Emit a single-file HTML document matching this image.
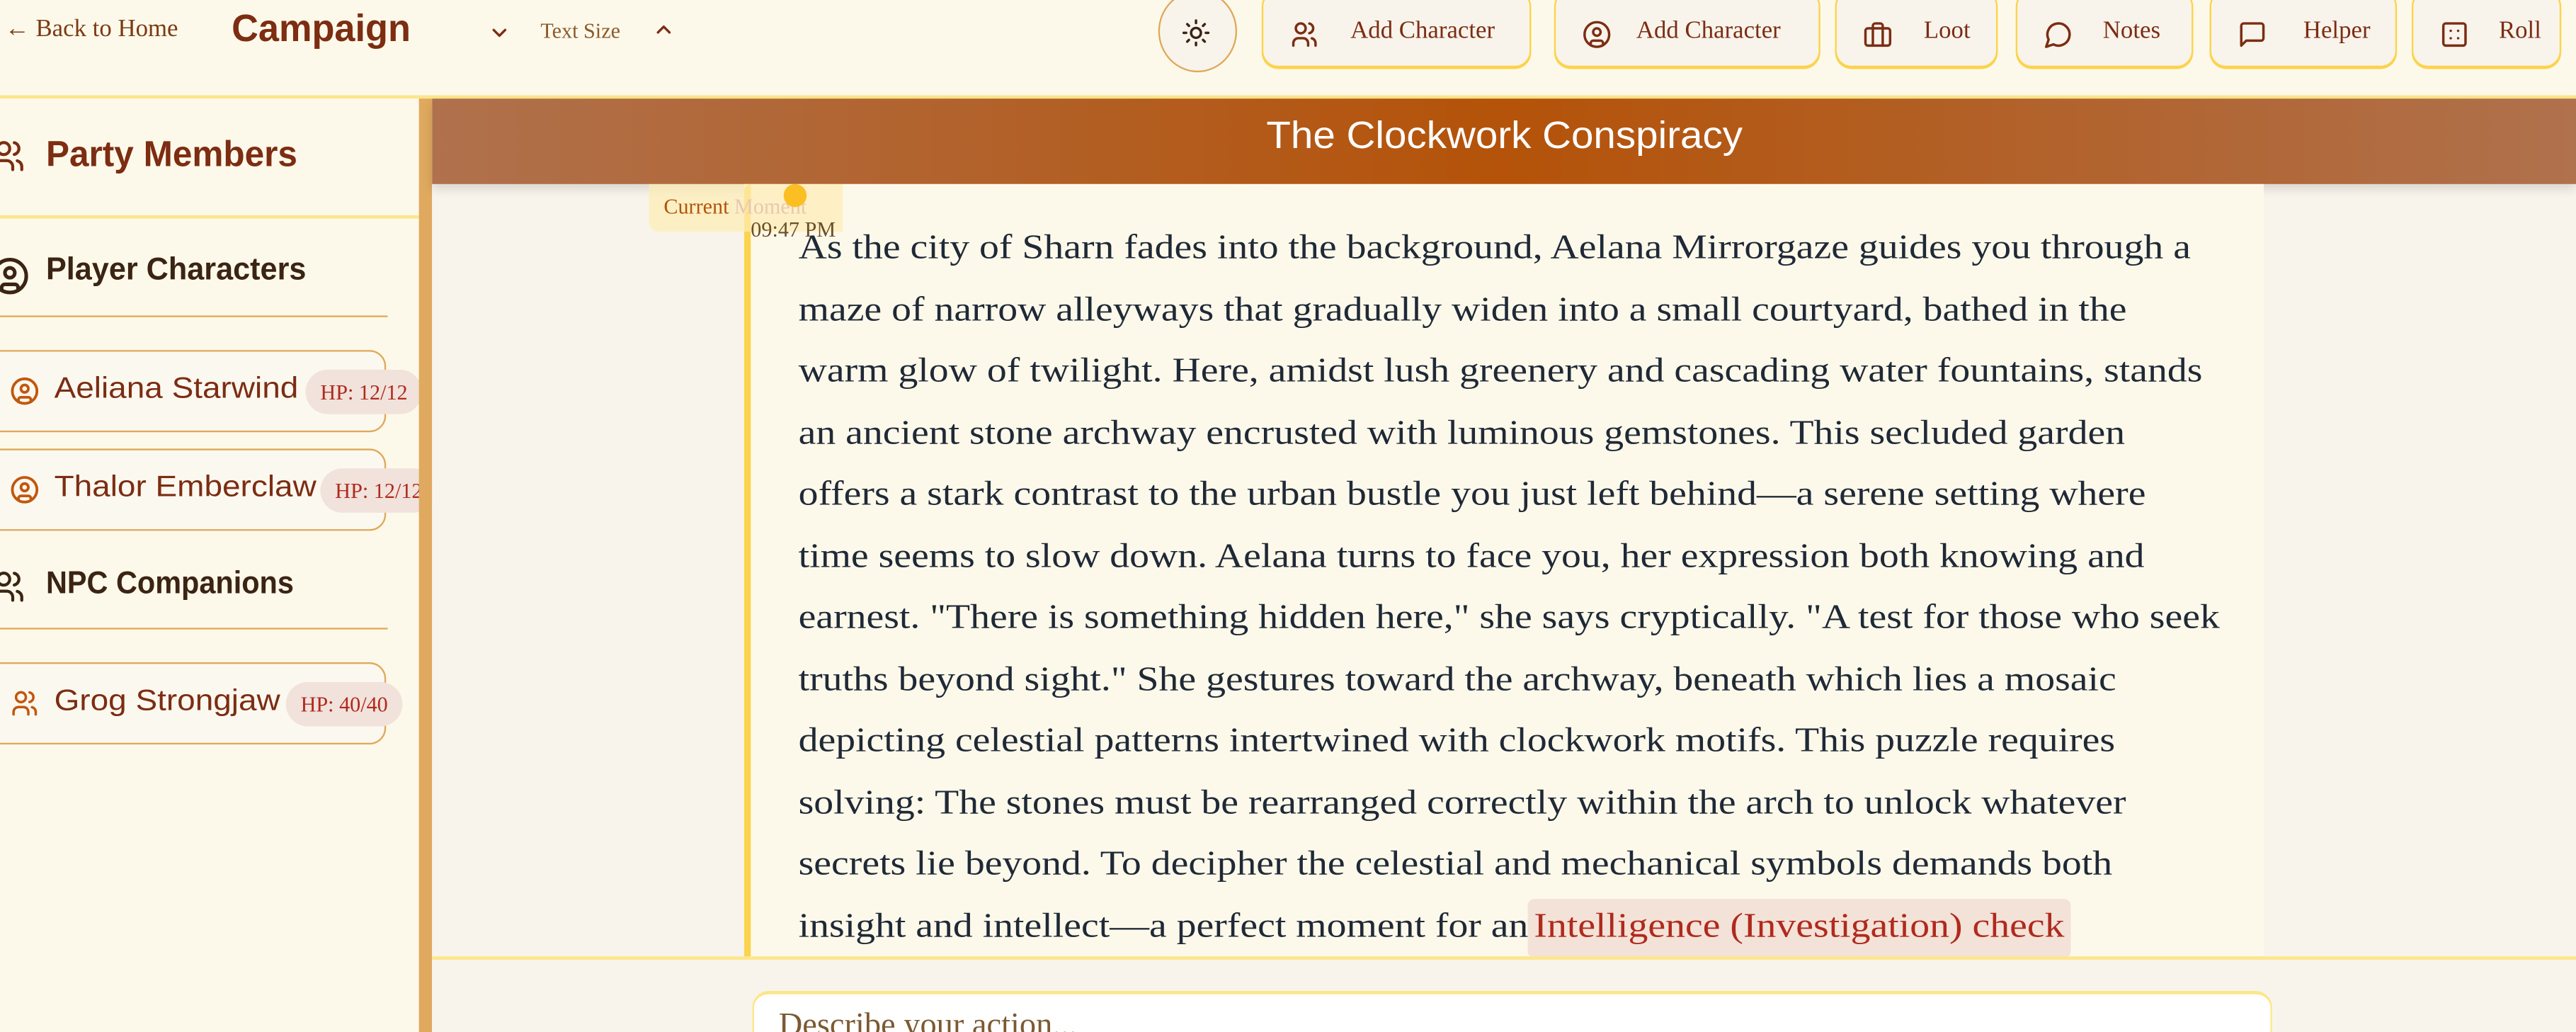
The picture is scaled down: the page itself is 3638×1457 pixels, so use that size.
<!DOCTYPE html>
<html><head><meta charset="utf-8"><style>
*{box-sizing:border-box;margin:0;padding:0}
html,body{width:3638px;height:1456px;overflow:hidden;background:#fdf9ea}
#s{position:absolute;left:0;top:0;width:1568px;height:628px;transform:scale(2.32015);transform-origin:0 0;font-family:"Liberation Serif",serif;background:#fdf9ea;overflow:hidden}
.a{position:absolute}
.disp{font-family:"Liberation Sans",sans-serif;font-weight:bold;transform-origin:0 50%;white-space:nowrap}
.btn{position:absolute;top:-6px;height:47px;background:#f8f4ec;border:1px solid #fcd34d;border-radius:10px;color:#7c2d12;font-size:15px;padding-top:16px;box-shadow:0 1px 0 #fcd34d}
.btn svg{position:absolute;left:16px;top:17px}
.btn span{position:absolute;top:16px}
svg{stroke-linecap:round;stroke-linejoin:round}
.card{position:absolute;left:-12px;width:247px;height:50px;border:1px solid #e0a85a;border-radius:10px;background:#fbf8f0}
.card svg{position:absolute;left:17px;top:15px}
.card .n{position:absolute;left:44px;top:12px;font-family:"Liberation Sans",sans-serif;font-size:18px;color:#7c2d12;white-space:nowrap;transform:scaleX(1.1);transform-origin:0 50%}
.hp{position:absolute;top:11px;height:27px;border-radius:14px;background:#f1e2dc;color:#b02a1d;font-size:13px;padding:6px 9px;white-space:nowrap}
.txt{transform:scaleX(1.144);transform-origin:0 0}
.txt div{height:37.5px;line-height:37.5px;white-space:nowrap}
</style></head><body><div id="s">
<!-- header -->
<div class="a" style="left:3px;top:10px;font-size:15px;color:#7c3a12">← Back to Home</div>
<div class="a disp" style="left:141px;top:4px;font-size:23px;color:#7c2d12;transform:scaleX(0.98)">Campaign</div>
<svg class="a" style="left:297px;top:13px" width="14" height="14" viewBox="0 0 24 24" fill="none" stroke="#7c2d12" stroke-width="2.5"><path d="M6 9l6 6 6-6"/></svg>
<div class="a" style="left:329px;top:11px;font-size:13px;color:#8a5a2b">Text Size</div>
<svg class="a" style="left:397px;top:11px" width="14" height="14" viewBox="0 0 24 24" fill="none" stroke="#7c2d12" stroke-width="2.5"><path d="M6 15l6-6 6 6"/></svg>
<div class="a" style="left:705px;top:-6px;width:48px;height:50px;border-radius:50%;background:#f8f4ec;border:1px solid #e0a85a"></div>
<svg class="a" style="left:719px;top:11px" width="18" height="18" viewBox="0 0 24 24" fill="none" stroke="#3b2414" stroke-width="2"><circle cx="12" cy="12" r="4"/><path d="M12 2v2M12 20v2M4.9 4.9l1.4 1.4M17.7 17.7l1.4 1.4M2 12h2M20 12h2M4.9 19.1l1.4-1.4M17.7 6.3l1.4-1.4"/></svg>
<div class="btn" style="left:768px;width:164px"><svg width="18" height="18" viewBox="0 0 24 24" fill="none" stroke="#7c2d12" stroke-width="2"><circle cx="9" cy="7" r="4"/><path d="M3 21v-2a4 4 0 0 1 4-4h4a4 4 0 0 1 4 4v2M16 3.1a4 4 0 0 1 0 7.8M21 21v-2a4 4 0 0 0-3-3.9"/></svg><span style="left:53px">Add Character</span></div>
<div class="btn" style="left:946px;width:162px"><svg width="18" height="18" viewBox="0 0 24 24" fill="none" stroke="#7c2d12" stroke-width="2"><circle cx="12" cy="12" r="10"/><circle cx="12" cy="10" r="3"/><path d="M7 20.7v-1.7a2 2 0 0 1 2-2h6a2 2 0 0 1 2 2v1.7"/></svg><span style="left:49px">Add Character</span></div>
<div class="btn" style="left:1117px;width:99px"><svg width="18" height="18" viewBox="0 0 24 24" fill="none" stroke="#7c2d12" stroke-width="2"><rect x="2" y="7" width="20" height="14" rx="2"/><path d="M16 21V5a2 2 0 0 0-2-2h-4a2 2 0 0 0-2 2v16"/></svg><span style="left:53px">Loot</span></div>
<div class="btn" style="left:1227px;width:108px"><svg width="18" height="18" viewBox="0 0 24 24" fill="none" stroke="#7c2d12" stroke-width="2"><path d="M7.9 20A9 9 0 1 0 4 16.1L2 22z"/></svg><span style="left:52px">Notes</span></div>
<div class="btn" style="left:1345px;width:114px"><svg width="18" height="18" viewBox="0 0 24 24" fill="none" stroke="#7c2d12" stroke-width="2"><path d="M21 15a2 2 0 0 1-2 2H7l-4 4V5a2 2 0 0 1 2-2h14a2 2 0 0 1 2 2z"/></svg><span style="left:56px">Helper</span></div>
<div class="btn" style="left:1468px;width:91px"><svg width="18" height="18" viewBox="0 0 24 24" fill="none" stroke="#7c2d12" stroke-width="2"><rect x="3" y="3" width="18" height="18" rx="2"/><path d="M9 9h.01M15 15h.01M9 15h.01M15 9h.01"/></svg><span style="left:52px">Roll</span></div>
<div class="a" style="left:0;top:58px;width:1568px;height:2px;background:#fde68a"></div>
<!-- sidebar -->
<div class="a" style="left:0;top:60px;width:255px;height:568px;background:#fdf9ea"></div>
<svg class="a" style="left:-6px;top:84px" width="22" height="22" viewBox="0 0 24 24" fill="none" stroke="#7c2d12" stroke-width="2"><circle cx="9" cy="7" r="4"/><path d="M3 21v-2a4 4 0 0 1 4-4h4a4 4 0 0 1 4 4v2M16 3.1a4 4 0 0 1 0 7.8M21 21v-2a4 4 0 0 0-3-3.9"/></svg>
<div class="a disp" style="left:28px;top:81px;font-size:22px;color:#7c2d12;transform:scaleX(0.97)">Party Members</div>
<div class="a" style="left:0;top:131px;width:255px;height:2px;background:#fde68a"></div>
<svg class="a" style="left:-6px;top:156px" width="24" height="24" viewBox="0 0 24 24" fill="none" stroke="#3b2414" stroke-width="2.2"><circle cx="12" cy="12" r="10"/><circle cx="12" cy="10" r="3"/><path d="M7 20.7v-1.7a2 2 0 0 1 2-2h6a2 2 0 0 1 2 2v1.7"/></svg>
<div class="a disp" style="left:28px;top:154px;font-size:19px;color:#3b2414;transform:scaleX(0.98)">Player Characters</div>
<div class="a" style="left:0;top:192px;width:236px;height:1px;background:#e3a857"></div>
<div class="card" style="top:213px"><svg width="18" height="18" viewBox="0 0 24 24" fill="none" stroke="#c2570c" stroke-width="2.2"><circle cx="12" cy="12" r="10"/><circle cx="12" cy="10" r="3"/><path d="M7 20.7v-1.7a2 2 0 0 1 2-2h6a2 2 0 0 1 2 2v1.7"/></svg><div class="n">Aeliana Starwind</div><div class="hp" style="left:197px">HP: 12/12</div></div>
<div class="card" style="top:273px"><svg width="18" height="18" viewBox="0 0 24 24" fill="none" stroke="#c2570c" stroke-width="2.2"><circle cx="12" cy="12" r="10"/><circle cx="12" cy="10" r="3"/><path d="M7 20.7v-1.7a2 2 0 0 1 2-2h6a2 2 0 0 1 2 2v1.7"/></svg><div class="n">Thalor Emberclaw</div><div class="hp" style="left:206px;width:70px">HP: 12/12</div></div>
<svg class="a" style="left:-6px;top:346px" width="22" height="22" viewBox="0 0 24 24" fill="none" stroke="#3b2414" stroke-width="2"><circle cx="9" cy="7" r="4"/><path d="M3 21v-2a4 4 0 0 1 4-4h4a4 4 0 0 1 4 4v2M16 3.1a4 4 0 0 1 0 7.8M21 21v-2a4 4 0 0 0-3-3.9"/></svg>
<div class="a disp" style="left:28px;top:345px;font-size:19px;color:#3b2414;transform:scaleX(0.94)">NPC Companions</div>
<div class="a" style="left:0;top:382px;width:236px;height:1px;background:#e3a857"></div>
<div class="card" style="top:403px"><svg width="18" height="18" viewBox="0 0 24 24" fill="none" stroke="#c2570c" stroke-width="2"><circle cx="9" cy="7" r="4"/><path d="M3 21v-2a4 4 0 0 1 4-4h4a4 4 0 0 1 4 4v2M16 3.1a4 4 0 0 1 0 7.8M21 21v-2a4 4 0 0 0-3-3.9"/></svg><div class="n">Grog Strongjaw</div><div class="hp" style="left:185px">HP: 40/40</div></div>
<div class="a" style="left:255px;top:60px;width:8px;height:568px;background:#dfa95f"></div>
<!-- main -->
<div class="a" style="left:263px;top:60px;width:1305px;height:568px;background:#f8f4ec"></div>
<div class="a" style="left:263px;top:60px;width:1305px;height:52px;background:linear-gradient(90deg,#b0714d 0%,#b45309 50%,#b0714d 100%);box-shadow:0 3px 6px rgba(0,0,0,.12)"></div>
<div class="a" style="left:263px;top:69px;width:1305px;text-align:center;color:#fff;font-size:23px;font-family:'Liberation Sans',sans-serif"><span style="display:inline-block;transform:scaleX(1.06)">The Clockwork Conspiracy</span></div>
<div class="a" style="left:453px;top:112px;width:925px;height:470px;background:#fdf9ea"></div>
<div class="a" style="left:453px;top:112px;width:4px;height:470px;background:#fcd34d;border-radius:4px 0 0 0"></div>
<div class="a" style="left:395px;top:112px;width:118px;height:29px;background:rgba(253,236,180,.7);border-radius:0 0 0 6px"></div>
<div class="a" style="left:404px;top:118px;font-size:13px;color:#b45309">Current <span style="color:#e8c8b0">Moment</span></div>
<div class="a" style="left:477px;top:112px;width:14px;height:14px;border-radius:50%;background:#fbbf24"></div>
<div class="a" style="left:457px;top:132px;font-size:13px;color:#6b4f2a">09:47 PM</div>
<div class="a txt" style="left:486px;top:132px;font-size:21px;color:#1f2937">
<div>As the city of Sharn fades into the background, Aelana Mirrorgaze guides you through a</div>
<div>maze of narrow alleyways that gradually widen into a small courtyard, bathed in the</div>
<div>warm glow of twilight. Here, amidst lush greenery and cascading water fountains, stands</div>
<div>an ancient stone archway encrusted with luminous gemstones. This secluded garden</div>
<div>offers a stark contrast to the urban bustle you just left behind—a serene setting where</div>
<div>time seems to slow down. Aelana turns to face you, her expression both knowing and</div>
<div>earnest. "There is something hidden here," she says cryptically. "A test for those who seek</div>
<div>truths beyond sight." She gestures toward the archway, beneath which lies a mosaic</div>
<div>depicting celestial patterns intertwined with clockwork motifs. This puzzle requires</div>
<div>solving: The stones must be rearranged correctly within the arch to unlock whatever</div>
<div>secrets lie beyond. To decipher the celestial and mechanical symbols demands both</div>
<div>insight and intellect—a perfect moment for an<span style="background:#f3e2d7;color:#b02a1d;padding:4px 3px 8px;border-radius:4px">Intelligence (Investigation) check</span></div>
</div>
<div class="a" style="left:263px;top:582px;width:1305px;height:46px;background:#f8f4ec;border-top:2px solid #fde68a"></div>
<div class="a" style="left:458px;top:603px;width:925px;height:40px;background:#fff;border:1px solid #fde68a;border-top:2px solid #fde68a;border-radius:10px"></div>
<div class="a" style="left:474px;top:613px;font-size:20px;color:#7c5a30">Describe your action...</div>
</div></body></html>
